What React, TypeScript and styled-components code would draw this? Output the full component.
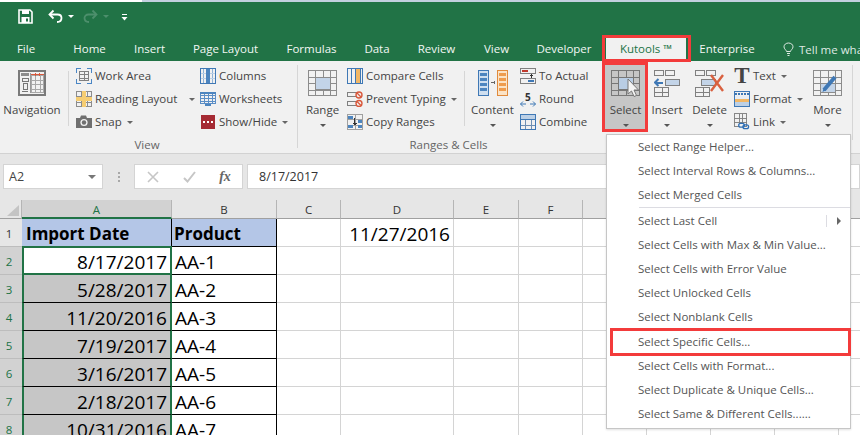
import React from "react";
import styled, { createGlobalStyle } from "styled-components";

const Global = createGlobalStyle`
  html, body { margin: 0; padding: 0; background: #fff; }
  body { font-family: "Open Sans", "Noto Sans", sans-serif; }
`;

const Page = styled.div`
  position: relative;
  width: 860px;
  height: 435px;
  overflow: hidden;
  background: #e6e6e6;
  font-family: "Open Sans", "Noto Sans", sans-serif;
`;

const TopStrip = styled.div`
  display: flex;
  height: 2px;
  background: #c3d0df;
`;
const TopStripWhite = styled.div`
  width: 142px;
  background: #fff;
`;

const TitleBar = styled.div`
  background: #217346;
  height: 59px;
  display: flex;
  flex-direction: column;
`;
const Qat = styled.div`
  height: 35px;
  display: flex;
  align-items: flex-start;
  padding: 7px 0 0 18px;
  box-sizing: border-box;
`;
const QatSlot = styled.span<{ $w: number }>`
  display: flex;
  width: ${(p) => p.$w}px;
`;
const Tabs = styled.div`
  height: 24px;
  display: flex;
  align-items: stretch;
`;
const Tab = styled.div<{ $w: number; $active?: boolean; $gap?: number }>`
  position: relative;
  width: ${(p) => p.$w}px;
  margin-left: ${(p) => p.$gap ?? 0}px;
  flex: none;
  display: flex;
  align-items: center;
  justify-content: center;
  font-size: 11.5px;
  line-height: 24px;
  box-sizing: border-box;
  color: ${(p) => (p.$active ? "#217346" : "#f2f7f4")};
  background: ${(p) => (p.$active ? "#f1f1f1" : "transparent")};
  ${(p) =>
    p.$active
      ? `&::after { content: ""; position: absolute; top: -2px; left: -4px; right: -5px; bottom: -1px; border: 3px solid #f33b3b; }`
      : ""}
`;
const TellMe = styled.div`
  margin-left: 15px;
  display: flex;
  align-items: center;
  gap: 5px;
  font-size: 11.5px;
  color: #dfeae4;
  white-space: nowrap;
`;

const Ribbon = styled.div`
  height: 92px;
  background: #f1f1f1;
  border-bottom: 1px solid #d2d2d2;
  box-sizing: content-box;
  display: flex;
  color: #444;
  font-size: 11.5px;
`;
const Group = styled.div<{ $w: number }>`
  width: ${(p) => p.$w}px;
  flex: none;
  display: flex;
  flex-direction: column;
`;
const GroupBody = styled.div`
  height: 76px;
  display: flex;
`;
const GroupLabel = styled.div<{ $shift: number }>`
  height: 16px;
  line-height: 16px;
  text-align: center;
  font-size: 11.5px;
  color: #666;
  padding-right: ${(p) => p.$shift}px;
`;
const GroupDivider = styled.div<{ $bottom?: number }>`
  width: 1px;
  flex: none;
  margin: 4px 0 ${(p) => p.$bottom ?? 5}px;
  background: #d6d6d6;
`;
const InnerSep = styled.div<{ $l: number; $r: number }>`
  width: 1px;
  height: 55px;
  flex: none;
  margin: 10px ${(p) => p.$r}px 0 ${(p) => p.$l}px;
  background: #d6d6d6;
`;
const Big = styled.div<{ $w: number; $on?: boolean; $left?: number }>`
  position: relative;
  width: ${(p) => p.$w}px;
  margin-left: ${(p) => p.$left ?? 0}px;
  height: 69px;
  margin-top: 1px;
  flex: none;
  display: flex;
  flex-direction: column;
  align-items: center;
  padding-top: 8px;
  box-sizing: border-box;
  background: ${(p) => (p.$on ? "#c6c6c6" : "transparent")};
  ${(p) =>
    p.$on
      ? `&::after { content: ""; position: absolute; top: 0; left: -3px; right: -2px; bottom: -1px; border: 3px solid #f33b3b; }`
      : ""}
`;
const BigIcon = styled.div`
  height: 26px;
  display: flex;
  justify-content: center;
`;
const BigLabel = styled.div`
  margin-top: 5px;
  height: 18px;
  line-height: 18px;
  white-space: nowrap;
`;
const BigCaret = styled.div`
  margin-top: 5px;
  width: 0;
  height: 0;
  border-left: 3px solid transparent;
  border-right: 3px solid transparent;
  border-top: 3px solid #555;
`;
const SmallCol = styled.div<{ $w: number; $left?: number }>`
  width: ${(p) => p.$w}px;
  margin-left: ${(p) => p.$left ?? 0}px;
  flex: none;
  padding-top: 3px;
  box-sizing: border-box;
  display: flex;
  flex-direction: column;
`;
const SmallRow = styled.div`
  height: 23px;
  display: flex;
  align-items: center;
  gap: 3px;
  white-space: nowrap;
`;
const SmallIcon = styled.span`
  width: 16px;
  height: 18px;
  flex: none;
  display: flex;
  align-items: center;
  justify-content: center;
`;
const Caret = styled.span<{ $gap: number }>`
  width: 0;
  height: 0;
  margin-left: ${(p) => p.$gap}px;
  margin-top: 2px;
  border-left: 3px solid transparent;
  border-right: 3px solid transparent;
  border-top: 3px solid #666;
`;
const TGlyph = styled.span`
  font-family: "Liberation Serif", serif;
  font-weight: 700;
  font-size: 23px;
  line-height: 18px;
  color: #444;
`;

const FormulaArea = styled.div`
  height: 46px;
  padding-top: 10px;
  box-sizing: border-box;
  display: flex;
  align-items: flex-start;
  background: #e6e6e6;
`;
const FieldBox = styled.div`
  height: 25px;
  box-sizing: border-box;
  background: #fff;
  border: 1px solid #d4d4d4;
  display: flex;
  align-items: center;
  font-size: 12.5px;
  color: #444;
`;
const NameBox = styled(FieldBox)`
  width: 100px;
  margin-left: 3px;
  padding: 0 6px 0 5px;
  justify-content: space-between;
`;
const NameCaret = styled.span`
  width: 0;
  height: 0;
  border-left: 4px solid transparent;
  border-right: 4px solid transparent;
  border-top: 4px solid #777;
`;
const Dots = styled.div`
  width: 31px;
  height: 25px;
  flex: none;
  display: flex;
  flex-direction: column;
  align-items: center;
  justify-content: center;
  gap: 2px;
`;
const Dot = styled.span`
  width: 2px;
  height: 2px;
  background: #a8a8a8;
`;
const FxBox = styled(FieldBox)`
  width: 109px;
  display: grid;
  grid-template-columns: repeat(3, 36px);
  justify-items: center;
  align-items: center;
`;
const FxGlyph = styled.span`
  font-family: "Liberation Serif", serif;
  font-style: italic;
  font-size: 14px;
  font-weight: 700;
  color: #666;
`;
const FormulaInput = styled(FieldBox)`
  flex: 1;
  margin-left: 4px;
  padding-left: 11px;
  color: #333;
`;

const Sheet = styled.div`
  display: grid;
  grid-template-columns: 22px 150px 105px 64px 113px 65px repeat(6, 64px);
  grid-template-rows: 19px repeat(8, 28px);
  background: #fff;
  height: 235px;
  overflow: hidden;
`;
const Corner = styled.div`
  background: #e6e6e6;
  border-right: 1px solid #b5b5b5;
  border-bottom: 1px solid #a0a0a0;
  box-sizing: border-box;
  display: flex;
  align-items: flex-start;
  padding: 5px 0 0 7px;
`;
const ColHead = styled.div<{ $sel?: boolean }>`
  box-sizing: border-box;
  background: ${(p) => (p.$sel ? "#d2d2d2" : "#e6e6e6")};
  border-right: 1px solid #b5b5b5;
  border-bottom: ${(p) => (p.$sel ? "2px solid #217346" : "1px solid #a0a0a0")};
  color: ${(p) => (p.$sel ? "#217346" : "#333")};
  font-size: 11.5px;
  text-align: center;
  line-height: 19px;
`;
const RowHead = styled.div<{ $sel?: boolean }>`
  box-sizing: border-box;
  background: ${(p) => (p.$sel ? "#d2d2d2" : "#e6e6e6")};
  border-bottom: 1px solid #bdbdbd;
  color: ${(p) => (p.$sel ? "#217346" : "#333")};
  font-size: 11.5px;
  padding-right: 4px;
  padding-top: 3px;
  text-align: center;
  line-height: 24px;
`;
type CellKind = "plain" | "head" | "active" | "selected" | "data";
const cellBg: Record<CellKind, string> = {
  plain: "#fff",
  head: "#b4c6e7",
  active: "#fff",
  selected: "#c6c6c6",
  data: "#fff",
};
const Cell = styled.div<{ $kind: CellKind; $align?: string; $bold?: boolean; $inset?: number }>`
  box-sizing: border-box;
  background: ${(p) => cellBg[p.$kind]};
  font-family: "Open Sans", "Noto Sans", sans-serif;
  font-size: ${(p) => (p.$bold ? 17 : 19)}px;
  font-weight: ${(p) => (p.$bold ? 700 : 400)};
  color: #000;
  line-height: 26px;
  padding: 2px 3px 0 ${(p) => p.$inset ?? 3}px;
  white-space: nowrap;
  text-align: ${(p) => p.$align ?? "left"};
  border-right: 1px solid ${(p) => (p.$kind === "plain" ? "#d4d4d4" : "#000")};
  border-bottom: 1px solid ${(p) => (p.$kind === "plain" ? "#d4d4d4" : "#000")};
  ${(p) =>
    p.$kind === "active"
      ? "border: 2px solid #217346; margin: -1px 0 0 0; padding-top: 1px;"
      : ""}
  ${(p) =>
    p.$kind === "selected"
      ? "border-left: 2px solid #217346; border-right: 2px solid #217346;"
      : ""}
`;

const Menu = styled.div`
  position: absolute;
  left: 606px;
  top: 134px;
  width: 245px;
  height: 295px;
  box-sizing: border-box;
  background: #fff;
  border: 1px solid #c6c6c6;
  box-shadow: 0 1px 2px rgba(0, 0, 0, 0.12);
  font-size: 11.5px;
  color: #555;
`;
const MenuItem = styled.div<{ $hot?: boolean }>`
  position: relative;
  height: ${(p) => (p.$hot ? 25 : 24)}px;
  line-height: ${(p) => (p.$hot ? 25 : 24)}px;
  padding-left: 31px;
  white-space: nowrap;
  ${(p) =>
    p.$hot
      ? `&::after { content: ""; position: absolute; top: -1px; left: 3px; right: -1px; bottom: -2px; border: 3px solid #f33b3b; }`
      : ""}
`;
const MenuSep = styled.div`
  height: 1px;
  margin: 0 0 1px 32px;
  background: #dcdce2;
`;
const SubMark = styled.span`
  position: absolute;
  right: 9px;
  top: 6px;
  width: 14px;
  height: 12px;
  border-left: 1px solid #dcdce2;
  &::after {
    content: "";
    position: absolute;
    right: 0;
    top: 2px;
    border-top: 4px solid transparent;
    border-bottom: 4px solid transparent;
    border-left: 4px solid #666;
  }
`;

const Svg = ({ w, h, children }: { w: number; h: number; children: React.ReactNode }) => (
  <svg width={w} height={h} viewBox={`0 0 ${w} ${h}`} fill="none" shapeRendering="crispEdges">
    {children}
  </svg>
);

const GridLines = ({ x, y, w, h, nx, ny, c = "#8c8c8c" }: { x: number; y: number; w: number; h: number; nx: number; ny: number; c?: string }) => {
  let d = "";
  for (let i = 1; i < nx; i++) {
    const px = Math.round(x + (w * i) / nx) + 0.5;
    d += `M${px} ${y}V${y + h}`;
  }
  for (let i = 1; i < ny; i++) {
    const py = Math.round(y + (h * i) / ny) + 0.5;
    d += `M${x} ${py}H${x + w}`;
  }
  return (
    <>
      <path d={d} stroke={c} />
      <rect x={x + 0.5} y={y + 0.5} width={w - 1} height={h - 1} stroke={c} />
    </>
  );
};

const SaveIcon = () => (
  <svg width="15" height="15" viewBox="0 0 15 15" fill="none">
    <path d="M1 1H12L14 3V14H1Z" stroke="#fff" strokeWidth="1.6" />
    <rect x="4" y="1" width="7" height="4" fill="#fff" />
    <rect x="3.5" y="8" width="8" height="6" fill="#fff" />
    <rect x="8" y="9.5" width="2" height="3" fill="#217346" />
  </svg>
);
const UndoIcon = ({ c }: { c: string }) => (
  <svg width="15" height="15" viewBox="0 0 15 15" fill="none">
    <path d="M2 5.5H9.5C12 5.5 13.5 7.2 13.5 9C13.5 11.2 12 13 9 13" stroke={c} strokeWidth="1.8" />
    <path d="M5.5 1.5L1.5 5.5L5.5 9.5" stroke={c} strokeWidth="1.8" />
  </svg>
);
const RedoIcon = ({ c }: { c: string }) => (
  <svg width="15" height="15" viewBox="0 0 15 15" fill="none">
    <path d="M13 5.5H5.5C3 5.5 1.5 7.2 1.5 9C1.5 11.2 3 13 6 13" stroke={c} strokeWidth="1.8" />
    <path d="M9.5 1.5L13.5 5.5L9.5 9.5" stroke={c} strokeWidth="1.8" />
  </svg>
);
const MiniCaret = ({ c }: { c: string }) => (
  <svg width="6" height="15" viewBox="0 0 6 15">
    <path d="M0 6H6L3 9Z" fill={c} />
  </svg>
);
const CustomizeIcon = () => (
  <svg width="7" height="15" viewBox="0 0 7 15">
    <rect x="1" y="5" width="5" height="1" fill="#fff" />
    <path d="M0.5 8H6.5L3.5 11.5Z" fill="#fff" />
  </svg>
);
const BulbIcon = () => (
  <svg width="11" height="14" viewBox="0 0 11 14" fill="none" stroke="#dfeae4">
    <path d="M3.5 9.5C3.2 7.8 1 7 1 4.8C1 2.6 3 1 5.5 1C8 1 10 2.6 10 4.8C10 7 7.8 7.8 7.5 9.5Z" />
    <path d="M4 11.5H7M4.5 13.5H6.5" />
  </svg>
);

const NavIcon = () => (
  <Svg w={28} h={26}>
    <rect x="1" y="1" width="26" height="24" stroke="#7a7a7a" strokeWidth="2" />
    <rect x="3" y="3" width="8" height="3" fill="#8c8c8c" />
    <rect x="4" y="8" width="6" height="3" stroke="#777" />
    <rect x="5" y="13" width="4" height="6" stroke="#777" />
    <rect x="4" y="21" width="6" height="1" fill="#777" />
    <path d="M12.5 3V23" stroke="#999" />
    <GridLines x={13} y={5} w={13} h={18} nx={3} ny={4} c="#a8a8a8" />
    <rect x="13" y="4" width="13" height="1" fill="#d9583b" />
    <path d="M17.5 3V6M21.5 3V6" stroke="#d9583b" />
  </Svg>
);
const WorkAreaIcon = () => (
  <Svg w={16} h={16}>
    <path d="M0.5 5V0.5H5M11 0.5H15.5V5M15.5 11V15.5H11M5 15.5H0.5V11" stroke="#4a86c5" />
    <GridLines x={3} y={3} w={10} h={10} nx={2} ny={3} c="#808080" />
  </Svg>
);
const ReadingIcon = () => (
  <Svg w={16} h={16}>
    <GridLines x={0} y={0} w={16} h={16} nx={3} ny={3} c="#8c8c8c" />
    <rect x="6" y="0" width="4" height="16" fill="#f6cd72" />
    <rect x="0" y="6" width="16" height="4" fill="#f6cd72" />
  </Svg>
);
const CameraIcon = () => (
  <svg width="16" height="13" viewBox="0 0 16 13">
    <path d="M0 3H4L5 0.5H10L11 3H16V13H0Z" fill="#6f6f6f" />
    <circle cx="8" cy="7.5" r="3.6" fill="#f1f1f1" />
    <circle cx="8" cy="7.5" r="2.2" fill="#6f6f6f" />
  </svg>
);
const ColumnsIcon = () => (
  <Svg w={16} h={16}>
    <rect x="0.5" y="0.5" width="15" height="15" stroke="#3f78b5" />
    <rect x="6" y="1" width="4" height="14" fill="#4d85bf" />
    <path d="M3.5 1V15M12.5 1V15" stroke="#8fb2d6" />
    <path d="M1 5.5H6M1 10.5H6M10 5.5H15M10 10.5H15" stroke="#bcd0e6" />
  </Svg>
);
const WorksheetIcon = () => (
  <Svg w={16} h={16}>
    <GridLines x={0} y={1} w={16} h={12} nx={4} ny={4} c="#5b8ec6" />
    <rect x="0" y="1" width="16" height="2" fill="#4d85bf" />
    <rect x="5" y="13" width="6" height="2" fill="#4d85bf" />
  </Svg>
);
const ShowHideIcon = () => (
  <Svg w={14} h={14}>
    <rect x="0" y="0" width="14" height="14" fill="#a52a33" />
    <rect x="2" y="6" width="2" height="2" fill="#fff" />
    <rect x="6" y="6" width="2" height="2" fill="#fff" />
    <rect x="10" y="6" width="2" height="2" fill="#fff" />
  </Svg>
);
const RangeIcon = () => (
  <Svg w={29} h={26}>
    <GridLines x={0} y={0} w={29} h={26} nx={4} ny={4} c="#8c8c8c" />
    <rect x="7" y="7" width="15" height="12" fill="#c3d4e8" stroke="#8c8c8c" />
  </Svg>
);
const CompareIcon = () => (
  <Svg w={16} h={16}>
    <rect x="0.5" y="0.5" width="15" height="15" stroke="#3f78b5" />
    <rect x="9" y="1" width="4" height="14" fill="#f2b765" />
    <path d="M4.5 1V15M8.5 1V15M13.5 1V15" stroke="#3f78b5" />
  </Svg>
);
const PreventIcon = () => (
  <svg width="16" height="16" viewBox="0 0 16 16" fill="none">
    <rect x="0.5" y="1.5" width="9" height="4" stroke="#808080" />
    <rect x="0.5" y="10.5" width="9" height="4" stroke="#808080" />
    <circle cx="12" cy="4" r="3" stroke="#d9583b" strokeWidth="1.4" fill="#f1f1f1" />
    <path d="M10 2L14 6" stroke="#d9583b" strokeWidth="1.2" />
    <circle cx="12" cy="12.5" r="3" stroke="#d9583b" strokeWidth="1.4" fill="#f1f1f1" />
    <path d="M10 10.5L14 14.5" stroke="#d9583b" strokeWidth="1.2" />
  </svg>
);
const CopyRangesIcon = () => (
  <Svg w={16} h={16}>
    <GridLines x={0} y={0} w={16} h={16} nx={2} ny={3} c="#a0a0a0" />
    <rect x="1" y="2" width="5" height="3" fill="#4d85bf" />
    <rect x="1" y="11" width="5" height="3" fill="#4d85bf" />
    <rect x="11" y="6" width="4" height="3" fill="#4d85bf" />
    <rect x="11" y="11" width="4" height="3" fill="#4d85bf" />
    <path d="M7.5 4V11M5.5 9.5H9.5M6.5 10.5H8.5" stroke="#333" />
  </Svg>
);
const ContentIcon = () => (
  <Svg w={30} h={26}>
    <rect x="0.5" y="0.5" width="10" height="25" fill="#cfdff0" stroke="#3f78b5" />
    <rect x="2" y="3" width="7" height="3" fill="#4d85bf" />
    <rect x="2" y="8" width="7" height="3" fill="#4d85bf" />
    <rect x="2" y="13" width="7" height="3" fill="#4d85bf" />
    <rect x="2" y="18" width="7" height="3" fill="#4d85bf" />
    <rect x="19.5" y="0.5" width="10" height="25" fill="#fbe3c6" stroke="#e08a3c" />
    <rect x="21" y="3" width="7" height="3" fill="#ee9c4e" />
    <rect x="21" y="8" width="7" height="3" fill="#ee9c4e" />
    <rect x="21" y="13" width="7" height="3" fill="#ee9c4e" />
    <rect x="21" y="18" width="7" height="3" fill="#ee9c4e" />
    <path d="M13 12.5H17M16 11V14" stroke="#666" />
  </Svg>
);
const ToActualIcon = () => (
  <Svg w={16} h={16}>
    <rect x="0.5" y="0.5" width="15" height="5" stroke="#808080" />
    <rect x="2" y="2" width="6" height="2" fill="#c0392b" />
    <rect x="0.5" y="10.5" width="15" height="5" stroke="#808080" />
    <rect x="8" y="12" width="6" height="2" fill="#3f78b5" />
    <path d="M11.5 6V10M10 7.5H13" stroke="#333" />
  </Svg>
);
const RoundText = styled.text`
  font-family: "Open Sans", sans-serif;
  font-size: 10px;
  font-weight: 700;
  fill: #333;
`;
const RoundIcon = () => (
  <svg width="16" height="18" viewBox="0 0 16 18" fill="none">
    <RoundText x="5" y="11">5</RoundText>
    <path d="M0.5 14H6M15.5 14H10" stroke="#3f78b5" />
    <path d="M3 11.5L0.5 14L3 16.5M13 11.5L15.5 14L13 16.5" stroke="#3f78b5" />
  </svg>
);
const CombineIcon = () => (
  <Svg w={16} h={16}>
    <GridLines x={0} y={0} w={16} h={16} nx={3} ny={3} c="#6f8fb3" />
    <rect x="0" y="0" width="16" height="5" fill="#bcd0e6" stroke="#3f78b5" />
    <rect x="0.5" y="0.5" width="15" height="15" stroke="#3f78b5" />
  </Svg>
);
const SelectIcon = () => (
  <svg width="29" height="30" viewBox="0 0 29 30" fill="none" style={{ overflow: "visible" }}>
    <g shapeRendering="crispEdges">
      <GridLines x={0} y={0} w={29} h={26} nx={4} ny={4} c="#777" />
      <rect x="7" y="7" width="15" height="12" fill="#b9cde4" stroke="#777" />
    </g>
    <path d="M17 9V24L20.5 21L23 26.5L25.5 25.5L23 20H27.5Z" fill="#f4f4f4" stroke="#777" />
  </svg>
);
const InsertIcon = () => (
  <Svg w={26} h={27}>
    <rect x="0.5" y="0.5" width="9" height="5" stroke="#808080" />
    <rect x="11.5" y="0.5" width="9" height="5" stroke="#808080" />
    <rect x="11.5" y="9.5" width="14" height="6" fill="#c3d4e8" stroke="#808080" />
    <path d="M1 12.5H9" stroke="#3f78b5" strokeWidth="2" />
    <path d="M4.5 9L1 12.5L4.5 16" stroke="#3f78b5" strokeWidth="2" shapeRendering="auto" />
    <GridLines x={0} y={17} w={15} h={10} nx={2} ny={2} c="#808080" />
  </Svg>
);
const DeleteIcon = () => (
  <svg width="30" height="27" viewBox="0 0 30 27" fill="none">
    <g shapeRendering="crispEdges">
      <rect x="0.5" y="0.5" width="9" height="5" stroke="#808080" />
      <rect x="11.5" y="0.5" width="9" height="5" stroke="#808080" />
      <rect x="6.5" y="9.5" width="14" height="6" fill="#c3d4e8" stroke="#808080" />
      <GridLines x={0} y={17} w={15} h={10} nx={2} ny={2} c="#808080" />
    </g>
    <path d="M16 5L28 21M28 5L16 21" stroke="#d9603f" strokeWidth="2.4" />
  </svg>
);
const FormatIcon = () => (
  <Svg w={16} h={16}>
    <rect x="0.5" y="0.5" width="15" height="15" stroke="#3f78b5" />
    <path d="M1 2.5H15" stroke="#3f78b5" strokeWidth="2" strokeDasharray="2 1" />
    <rect x="1" y="5" width="14" height="3" fill="#e8eef5" />
    <rect x="1" y="8" width="14" height="3" fill="#f2b765" />
    <rect x="1" y="11" width="14" height="4" fill="#bcd0e6" />
  </Svg>
);
const LinkIcon = () => (
  <svg width="17" height="17" viewBox="0 0 17 17" fill="none">
    <g shapeRendering="crispEdges">
      <GridLines x={0} y={0} w={14} h={14} nx={3} ny={3} c="#808080" />
    </g>
    <rect x="5" y="10.5" width="6" height="4" rx="2" stroke="#2f6fb5" strokeWidth="1.4" fill="#f1f1f1" />
    <rect x="9.5" y="12" width="6" height="4" rx="2" stroke="#2f6fb5" strokeWidth="1.4" />
  </svg>
);
const MoreIcon = () => (
  <svg width="29" height="26" viewBox="0 0 29 26" fill="none">
    <g shapeRendering="crispEdges">
      <GridLines x={0} y={0} w={29} h={26} nx={4} ny={4} c="#8c8c8c" />
      <rect x="7" y="13" width="15" height="9" fill="#c3d4e8" stroke="#8c8c8c" />
    </g>
    <path d="M11 20L22 7" stroke="#3f78b5" strokeWidth="4" />
    <path d="M9.5 22L10.5 18.5L12.5 20.5Z" fill="#3f78b5" />
  </svg>
);
const XIcon = () => (
  <svg width="12" height="12" viewBox="0 0 12 12" fill="none">
    <path d="M1 1L11 11M11 1L1 11" stroke="#c6c6c6" strokeWidth="1.6" />
  </svg>
);
const CheckIcon = () => (
  <svg width="13" height="12" viewBox="0 0 13 12" fill="none">
    <path d="M1 7L4.5 10.5L12 1" stroke="#c6c6c6" strokeWidth="2" />
  </svg>
);
const CornerTri = () => (
  <svg width="12" height="11" viewBox="0 0 12 11">
    <path d="M12 0V11H0Z" fill="#c4c4c4" />
  </svg>
);

const tabs: { t: string; w: number }[] = [
  { t: "File", w: 52 },
  { t: "Home", w: 75 },
  { t: "Insert", w: 45 },
  { t: "Page Layout", w: 107 },
  { t: "Formulas", w: 65 },
  { t: "Data", w: 66 },
  { t: "Review", w: 53 },
  { t: "View", w: 67 },
  { t: "Developer", w: 68 },
];

const menuItems: (string | null)[] = [
  "Select Range Helper...",
  "Select Interval Rows & Columns...",
  "Select Merged Cells",
  null,
  "Select Last Cell",
  "Select Cells with Max & Min Value...",
  "Select Cells with Error Value",
  "Select Unlocked Cells",
  "Select Nonblank Cells",
  "Select Specific Cells...",
  "Select Cells with Format...",
  "Select Duplicate & Unique Cells...",
  "Select Same & Different Cells......",
];

const rows = [
  ["8/17/2017", "AA-1"],
  ["5/28/2017", "AA-2"],
  ["11/20/2016", "AA-3"],
  ["7/19/2017", "AA-4"],
  ["3/16/2017", "AA-5"],
  ["2/18/2017", "AA-6"],
  ["10/31/2016", "AA-7"],
];
const cols = ["A", "B", "C", "D", "E", "F", "", "", "", "", ""];
const blanks = (n: number, key: string) =>
  Array.from({ length: n }, (_, i) => <Cell key={key + i} $kind="plain" />);

export default function App() {
  return (
    <Page>
      <Global />
      <TopStrip>
        <TopStripWhite />
      </TopStrip>
      <TitleBar>
        <Qat>
          <QatSlot $w={30}><SaveIcon /></QatSlot>
          <QatSlot $w={20}><UndoIcon c="#fff" /></QatSlot>
          <QatSlot $w={15}><MiniCaret c="#fff" /></QatSlot>
          <QatSlot $w={20}><RedoIcon c="#4d8f6c" /></QatSlot>
          <QatSlot $w={18}><MiniCaret c="#4d8f6c" /></QatSlot>
          <QatSlot $w={10}><CustomizeIcon /></QatSlot>
        </Qat>
        <Tabs>
          {tabs.map((t) => (
            <Tab key={t.t} $w={t.w}>{t.t}</Tab>
          ))}
          <Tab $w={80} $gap={8} $active>Kutools ™</Tab>
          <Tab $w={82}>Enterprise</Tab>
          <TellMe><BulbIcon />Tell me what</TellMe>
        </Tabs>
      </TitleBar>

      <Ribbon>
        <Group $w={297}>
          <GroupBody>
            <Big $w={64}>
              <BigIcon><NavIcon /></BigIcon>
              <BigLabel>Navigation</BigLabel>
            </Big>
            <InnerSep $l={4} $r={7} />
            <SmallCol $w={124}>
              <SmallRow><SmallIcon><WorkAreaIcon /></SmallIcon>Work Area</SmallRow>
              <SmallRow><SmallIcon><ReadingIcon /></SmallIcon>Reading Layout<Caret $gap={9} /></SmallRow>
              <SmallRow><SmallIcon><CameraIcon /></SmallIcon>Snap<Caret $gap={2} /></SmallRow>
            </SmallCol>
            <SmallCol $w={97}>
              <SmallRow><SmallIcon><ColumnsIcon /></SmallIcon>Columns</SmallRow>
              <SmallRow><SmallIcon><WorksheetIcon /></SmallIcon>Worksheets</SmallRow>
              <SmallRow><SmallIcon><ShowHideIcon /></SmallIcon>Show/Hide<Caret $gap={2} /></SmallRow>
            </SmallCol>
          </GroupBody>
          <GroupLabel $shift={3}>View</GroupLabel>
        </Group>
        <GroupDivider />
        <Group $w={307}>
          <GroupBody>
            <Big $w={49}>
              <BigIcon><RangeIcon /></BigIcon>
              <BigLabel>Range</BigLabel>
              <BigCaret />
            </Big>
            <SmallCol $w={117}>
              <SmallRow><SmallIcon><CompareIcon /></SmallIcon>Compare Cells</SmallRow>
              <SmallRow><SmallIcon><PreventIcon /></SmallIcon>Prevent Typing<Caret $gap={2} /></SmallRow>
              <SmallRow><SmallIcon><CopyRangesIcon /></SmallIcon>Copy Ranges</SmallRow>
            </SmallCol>
            <InnerSep $l={0} $r={0} />
            <Big $w={55}>
              <BigIcon><ContentIcon /></BigIcon>
              <BigLabel>Content</BigLabel>
              <BigCaret />
            </Big>
            <SmallCol $w={85}>
              <SmallRow><SmallIcon><ToActualIcon /></SmallIcon>To Actual</SmallRow>
              <SmallRow><SmallIcon><RoundIcon /></SmallIcon>Round</SmallRow>
              <SmallRow><SmallIcon><CombineIcon /></SmallIcon>Combine</SmallRow>
            </SmallCol>
          </GroupBody>
          <GroupLabel $shift={6}>Ranges &amp; Cells</GroupLabel>
        </Group>
        <Group $w={247}>
          <GroupBody>
            <Big $w={41} $on>
              <BigIcon><SelectIcon /></BigIcon>
              <BigLabel>Select</BigLabel>
              <BigCaret />
            </Big>
            <Big $w={42}>
              <BigIcon><InsertIcon /></BigIcon>
              <BigLabel>Insert</BigLabel>
              <BigCaret />
            </Big>
            <Big $w={43}>
              <BigIcon><DeleteIcon /></BigIcon>
              <BigLabel>Delete</BigLabel>
              <BigCaret />
            </Big>
            <SmallCol $w={69} $left={3}>
              <SmallRow><SmallIcon><TGlyph>T</TGlyph></SmallIcon>Text<Caret $gap={2} /></SmallRow>
              <SmallRow><SmallIcon><FormatIcon /></SmallIcon>Format<Caret $gap={2} /></SmallRow>
              <SmallRow><SmallIcon><LinkIcon /></SmallIcon>Link<Caret $gap={2} /></SmallRow>
            </SmallCol>
            <Big $w={49}>
              <BigIcon><MoreIcon /></BigIcon>
              <BigLabel>More</BigLabel>
              <BigCaret />
            </Big>
          </GroupBody>
        </Group>
        <GroupDivider $bottom={13} />
      </Ribbon>

      <FormulaArea>
        <NameBox>A2<NameCaret /></NameBox>
        <Dots><Dot /><Dot /><Dot /></Dots>
        <FxBox><XIcon /><CheckIcon /><FxGlyph>fx</FxGlyph></FxBox>
        <FormulaInput>8/17/2017</FormulaInput>
      </FormulaArea>

      <Sheet>
        <Corner><CornerTri /></Corner>
        {cols.map((c, i) => (
          <ColHead key={i} $sel={c === "A"}>{c}</ColHead>
        ))}

        <RowHead>1</RowHead>
        <Cell $kind="head" $bold $inset={4}>Import Date</Cell>
        <Cell $kind="head" $bold $inset={2}>Product</Cell>
        <Cell $kind="plain" />
        <Cell $kind="plain" $align="right">11/27/2016</Cell>
        {blanks(7, "r1")}

        {rows.map((r, i) => (
          <React.Fragment key={r[1]}>
            <RowHead $sel>{i + 2}</RowHead>
            <Cell $kind={i === 0 ? "active" : "selected"} $align="right">{r[0]}</Cell>
            <Cell $kind="data">{r[1]}</Cell>
            {blanks(9, r[1])}
          </React.Fragment>
        ))}
      </Sheet>

      <Menu>
        {menuItems.map((m, i) =>
          m === null ? (
            <MenuSep key={i} />
          ) : (
            <MenuItem key={m} $hot={m === "Select Specific Cells..."}>
              {m}
              {m === "Select Last Cell" && <SubMark />}
            </MenuItem>
          )
        )}
      </Menu>
    </Page>
  );
}
